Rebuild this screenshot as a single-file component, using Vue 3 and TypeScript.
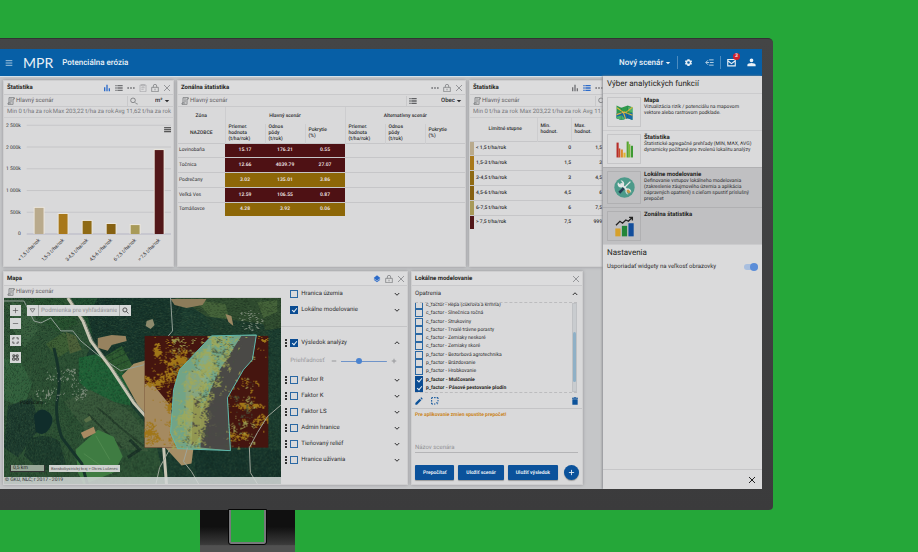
<script setup lang="ts">
import { computed, defineComponent, h, ref } from 'vue'

type Shape = { d: string; fill?: boolean }

const glyphs: Record<string, Shape[]> = {
  menu: [{ d: 'M2 5h20M2 12h20M2 19h20' }],
  bars: [{ d: 'M3 10h4v12H3zM10 2h4v20h-4zM17 13h4v9h-4z', fill: true }],
  list: [{ d: 'M1 3h4v4H1zM1 10h4v4H1zM1 17h4v4H1zM7 3h16v4H7zM7 10h16v4H7zM7 17h16v4H7z', fill: true }],
  dots: [{ d: 'M1 10h5v4H1zM9.500 10h5v4h-5zM18 10h5v4h-5z', fill: true }],
  clip: [{ d: 'M3 3h18v20H3zM8 1h8v5H8zM7 11h10M7 16h7' }],
  lock: [{ d: 'M2 10h20v13H2zM7 10V6a5 5 0 0 1 10 0v4M12 14v5' }],
  close: [{ d: 'M3 3l18 18M21 3L3 21' }],
  scroll: [{ d: 'M6 18V2h16v4h-4v15a2 2 0 0 1-4 1H3v-4h10M10 6h4M10 10h4M10 14h4' }],
  search: [{ d: 'M16 10a7 7 0 1 1-14 0 7 7 0 0 1 14 0zM15 16l5 5h3' }],
  find: [{ d: 'M17 10a7 7 0 1 1-14 0 7 7 0 0 1 14 0zM15 15l7 7' }],
  caret: [{ d: 'M3 8h18l-9 9z', fill: true }],
  down: [{ d: 'M3 8l9 9 9-9' }],
  up: [{ d: 'M3 16l9-9 9 9' }],
  layers: [{ d: 'M12 1l10 8-10 8L2 9zM2 14l10 8 10-8-2-1.500-8 6.500-8-6.500z', fill: true }],
  plus: [{ d: 'M12 3v18M3 12h18' }],
  minus: [{ d: 'M3 12h18' }],
  full: [{ d: 'M3 9V3h6M15 3h6v6M21 15v6h-6M9 21H3v-6' }],
  binocular: [{ d: 'M3 3h6v6H3zM15 3h6v6h-6zM2 14h8v7H2zM14 14h8v7h-8zM9 6h6M6 9v5M18 9v5M10 17h4' }],
  funnel: [{ d: 'M4 6h16l-8 12z' }],
  gear: [{ d: 'M19.400 13a7.500 7.500 0 0 0 0-2l2.100-1.600-2-3.500-2.500 1a7 7 0 0 0-1.700-1L15 3H9l-.4 2.900a7 7 0 0 0-1.700 1l-2.400-1-2 3.500L4.600 11a7.500 7.500 0 0 0 0 2l-2.100 1.600 2 3.500 2.400-1a7 7 0 0 0 1.700 1L9 21h6l.4-2.900a7 7 0 0 0 1.700-1l2.400 1 2-3.500zM12 15.500a3.500 3.500 0 1 1 0-7 3.500 3.500 0 0 1 0 7z', fill: true }],
  collapse: [{ d: 'M11 5h12M11 12H3M13 12h10M11 19h12M8 6l-6 6 6 6' }],
  mail: [{ d: 'M2 4h20v17H2zM3 8l9 7 9-7' }],
  person: [{ d: 'M12 11a5 5 0 1 0 0-10 5 5 0 0 0 0 10zM1 22v-4c0-3 6-5 11-5s11 2 11 5v4z', fill: true }],
  pencil: [{ d: 'M1 18v5h5L19 10l-5-5zM16 3l3-2 4 4-2 3z', fill: true }],
  marquee: [{ d: 'M2 6V2h4M9 2h5M17 2h4v4M21 9v4M2 9v5M2 17v4h4M9 21h4' }, { d: 'M15 15l8 3-3 1-1 4z', fill: true }],
  trash: [{ d: 'M4 7h16v16H4zM3 2h5l1-1h6l1 1h5v3H3z', fill: true }],
}

const Ico = defineComponent({
  props: { name: { type: String, required: true }, w: { type: Number, default: 2 } },
  setup(props) {
    return () =>
      h(
        'svg',
        { viewBox: '0 0 24 24', class: 'ico', 'aria-hidden': 'true' },
        glyphs[props.name].map((s) =>
          h('path', {
            d: s.d,
            fill: s.fill ? 'currentColor' : 'none',
            'fill-rule': 'evenodd',
            stroke: s.fill ? 'none' : 'currentColor',
            'stroke-width': props.w,
          }),
        ),
      )
  },
})

const ticks = ['2 500k', '2 000k', '1 500k', '1 000k', '500k', '0']
const classes = [
  { label: '< 1,5 t/ha/rok', value: 600, fill: '#b9aa8c', min: '0', max: '1,5' },
  { label: '1,5-3 t/ha/rok', value: 460, fill: '#a8781a', min: '1,5', max: '3' },
  { label: '3-4,5 t/ha/rok', value: 300, fill: '#8f6a14', min: '3', max: '4,5' },
  { label: '4,5-6 t/ha/rok', value: 230, fill: '#866112', min: '4,5', max: '6' },
  { label: '6-7,5 t/ha/rok', value: 205, fill: '#a89a58', min: '6', max: '7,5' },
  { label: '> 7,5 t/ha/rok', value: 1930, fill: '#521719', min: '7,5', max: '999' },
]
const bars = computed(() =>
  classes.map((c, i) => ({ ...c, x: 31 + i * 24.3, height: (c.value / 2500) * 110 })),
)

const zones = [
  { name: 'Lovinobaňa', cells: ['15.17', '176.21', '0.55'], high: true },
  { name: 'Točnica', cells: ['12.66', '4039.79', '27.07'], high: true },
  { name: 'Podrečany', cells: ['3.02', '135.01', '3.86'], high: false },
  { name: 'Veľká Ves', cells: ['12.59', '106.55', '0.87'], high: true },
  { name: 'Tomášovce', cells: ['4.28', '3.92', '0.06'], high: false },
]
const metrics = [
  ['Priemer.', 'hodnota', '(t/ha/rok)'],
  ['Odnos', 'pôdy', '(t/rok)'],
  ['Pokrytie', '(%)'],
]

const baseLayers = ref([
  { name: 'Hranica územia', on: false },
  { name: 'Lokálne modelovanie', on: true },
])
const result = ref({ name: 'Výsledok analýzy', on: true })
const layers = ref(
  ['Faktor R', 'Faktor K', 'Faktor LS', 'Admin hranice', 'Tieňovaný reliéf', 'Hranice užívania'].map((name) => ({
    name,
    on: false,
  })),
)
const opacity = ref(38)

const measures = ref(
  [
    'c_factor - Repa (cukrová a kŕmna)',
    'c_factor - Slnečnica ročná',
    'c_factor - Strukoviny',
    'c_factor - Trvalé trávne porasty',
    'c_factor - Zemiaky neskoré',
    'c_factor - Zemiaky skoré',
    'p_factor - Bezorbová agrotechnika',
    'p_factor - Brázdovanie',
    'p_factor - Hrobkovanie',
    'p_factor - Mulčovanie',
    'p_factor - Pásové pestovanie plodín',
  ].map((name, i) => ({ name, on: i > 8 })),
)
const scenario = ref('')
const query = ref('')
const fitWidgets = ref(true)

const functions = [
  { id: 'map', title: 'Mapa', text: ['Vizualizácia rizík / potenciálu na mapovom', 'vektore alebo rastrovom podklade.'], active: false },
  { id: 'stat', title: 'Štatistika', text: ['Štatistické agregačné prehľady (MIN, MAX, AVG)', 'dynamicky počítané pre zvolenú lokalitu analýzy'], active: false },
  {
    id: 'local',
    title: 'Lokálne modelovanie',
    text: ['Definovanie vstupov lokálneho modelovania', '(zakreslenie záujmového územia a aplikácia', 'nápravných opatrení) s cieľom spustiť príslušný', 'prepočet'],
    active: true,
  },
  { id: 'zonal', title: 'Zonálna štatistika', text: [] as string[], active: true },
]

// Deterministic value noise drives the erosion raster and the villages.
function hash(x: number, y: number): number {
  const n = Math.sin(x * 127.1 + y * 311.7) * 43758.5453
  return n - Math.floor(n)
}
function noise(x: number, y: number): number {
  const xi = Math.floor(x)
  const yi = Math.floor(y)
  const fx = x - xi
  const fy = y - yi
  const top = hash(xi, yi) * (1 - fx) + hash(xi + 1, yi) * fx
  const bottom = hash(xi, yi + 1) * (1 - fx) + hash(xi + 1, yi + 1) * fx
  return top * (1 - fy) + bottom * fy
}
function near(x: number, y: number, cx: number, cy: number, rx: number, ry: number): number {
  return Math.max(0, 1 - ((x - cx) / rx) ** 2 - ((y - cy) / ry) ** 2)
}
function cells(x0: number, y0: number, x1: number, y1: number, test: (x: number, y: number) => boolean): string {
  let d = ''
  for (let y = y0; y < y1; y++) for (let x = x0; x < x1; x++) if (test(x, y)) d += `M${x} ${y}h1v1h-1z`
  return d
}
const grain = (x: number, y: number) =>
  0.35 * noise((x + y) / 9, (x - y) / 7 + 30) + 0.35 * noise(x / 2.6 + 40, y / 2.6) + 0.3 * hash(x + 5, y + 9)
const ochre = cells(141, 38, 265, 150, (x, y) => {
  const bias =
    0.34 * near(x, y, 174, 70, 20, 24) +
    0.3 * near(x, y, 154, 54, 7, 12) +
    0.24 * near(x, y, 168, 42, 8, 6) +
    0.32 * near(x, y, 150, 84, 20, 9) +
    0.2 * near(x, y, 146, 138, 14, 22) +
    0.3 * near(x, y, 166, 118, 6, 40) +
    0.36 * near(x, y, 243, 108, 26, 4) +
    0.36 * near(x, y, 234, 138, 16, 6) +
    0.28 * near(x, y, 258, 122, 10, 7) +
    0.24 * near(x, y, 240, 84, 6, 6)
  return grain(x, y) + bias > 0.76
})
const lime = cells(168, 38, 252, 152, (x, y) => {
  const axis = 216 - (y - 38) * 0.3
  return grain(x + 90, y) + 0.2 * near(x, y, axis, y, 22, 1) + 0.16 * near(x, y, 188, 122, 16, 28) > 0.7
})
const shade = cells(170, 38, 250, 150, (x, y) => grain(x + 30, y + 70) + 0.12 * near(x, y, 222 - (y - 38) * 0.3, y, 14, 1) > 0.74)
const houses = cells(22, 8, 265, 112, (x, y) => {
  const p =
    near(x, y, 57, 78, 18, 12) + near(x, y, 46, 96, 16, 10) + near(x, y, 74, 92, 10, 14) + near(x, y, 245, 22, 15, 13)
  return p > 0 && 0.6 * hash(x, y) + 0.4 * noise(x / 3, y / 3) > 0.86 - p * 0.2
})
const canopy = cells(0, 0, 278, 188, (x, y) => hash(x + 7, y + 3) < 0.22)
const canopyDark = cells(0, 0, 278, 188, (x, y) => hash(x + 70, y + 13) < 0.2)
</script>

<template>
  <div class="scene">
    <div class="monitor">
      <div class="screen">
        <header class="topbar">
          <button class="plain" aria-label="Menu"><Ico name="menu" /></button>
          <span class="logo">MPR</span>
          <h1>Potenciálna erózia</h1>
          <div class="actions">
            <label class="pick"><select aria-label="Scenár"><option>Nový scenár</option></select><Ico name="caret" class="tiny" /></label>
            <i class="rule"></i>
            <button class="plain" aria-label="Nastavenia"><Ico name="gear" /></button>
            <button class="plain" aria-label="Panel"><Ico name="collapse" /></button>
            <i class="rule"></i>
            <button class="plain mail" aria-label="Správy"><Ico name="mail" :w="3" /><b>3</b></button>
            <button class="plain" aria-label="Profil"><Ico name="person" /></button>
          </div>
        </header>

        <div class="body">
          <main class="workspace">
            <div class="row upper">
              <section class="widget">
                <div class="head">
                  <h2>Štatistika</h2>
                  <button class="plain on" aria-label="Graf"><Ico name="bars" /></button>
                  <button class="plain" aria-label="Tabuľka"><Ico name="list" /></button>
                  <button class="plain" aria-label="Viac"><Ico name="dots" /></button>
                  <button class="plain faint" aria-label="Kopírovať"><Ico name="clip" /></button>
                  <button class="plain" aria-label="Zamknúť"><Ico name="lock" /></button>
                  <button class="plain" aria-label="Zavrieť"><Ico name="close" /></button>
                </div>
                <div class="bar">
                  <Ico name="scroll" /><span>Hlavný scenár</span>
                  <button class="plain split" aria-label="Hľadať"><Ico name="search" /></button>
                  <label class="pick unit"><select aria-label="Jednotka"><option>m²</option></select><Ico name="caret" class="tiny" /></label>
                </div>
                <p class="totals"><span>Min 0 t/ha za rok</span><span>Max 203,22 t/ha za rok</span><span>Avg 11,62 t/ha za rok</span></p>
                <div class="chart">
                  <svg viewBox="0 0 171 148" role="img" aria-label="Štatistika">
                    <g v-for="(t, i) in ticks" :key="t">
                      <path :d="`M23 ${6.5 + i * 22}H169`" :stroke="i === 5 ? '#b4b4c4' : '#c6c6c8'" stroke-width="1" />
                      <text x="17" :y="8 + i * 22" text-anchor="end" class="tick">{{ t }}</text>
                    </g>
                    <g v-for="b in bars" :key="b.label">
                      <rect :x="b.x - 1" :y="115.5 - b.height" width="11" :height="b.height + 1" fill="#ebe6dc" />
                      <rect :x="b.x" :y="116.5 - b.height" width="9" :height="b.height" :fill="b.fill" />
                      <text :transform="`translate(${b.x + 6} 123) rotate(-45)`" text-anchor="end" class="tick">{{ b.label }}</text>
                    </g>
                    <path d="M162 9h7M162 11h7M162 13h7" stroke="#333" stroke-width="1" />
                  </svg>
                </div>
              </section>

              <section class="widget">
                <div class="head">
                  <h2>Zonálna štatistika</h2>
                  <button class="plain" aria-label="Viac"><Ico name="dots" /></button>
                  <button class="plain" aria-label="Zamknúť"><Ico name="lock" /></button>
                  <button class="plain" aria-label="Zavrieť"><Ico name="close" /></button>
                </div>
                <div class="bar">
                  <Ico name="scroll" /><span>Hlavný scenár</span>
                  <button class="plain split" aria-label="Stĺpce"><Ico name="list" /></button>
                  <label class="pick zone"><select aria-label="Zóna"><option>Obec</option></select><Ico name="caret" class="tiny" /></label>
                </div>
                <table class="zonal">
                  <colgroup><col class="first" /><col span="6" /></colgroup>
                  <thead>
                    <tr class="group"><th>Zóna</th><th colspan="3">Hlavný scenár</th><th colspan="3">Alternatívny scenár</th></tr>
                    <tr class="names">
                      <th class="mid">NAZOBCE</th>
                      <th v-for="n in 6" :key="n"><span v-for="l in metrics[(n - 1) % 3]" :key="l">{{ l }}</span></th>
                    </tr>
                  </thead>
                  <tbody>
                    <tr v-for="z in zones" :key="z.name">
                      <th>{{ z.name }}</th>
                      <td v-for="c in z.cells" :key="c" :class="z.high ? 'high' : 'low'">{{ c }}</td>
                      <td></td><td></td><td></td>
                    </tr>
                  </tbody>
                </table>
              </section>

              <section class="widget cut">
                <div class="inner">
                  <div class="head">
                    <h2>Štatistika</h2>
                    <button class="plain" aria-label="Graf"><Ico name="bars" /></button>
                    <button class="plain on" aria-label="Tabuľka"><Ico name="list" /></button>
                    <button class="plain" aria-label="Viac"><Ico name="dots" /></button>
                    <button class="plain" aria-label="Kopírovať"><Ico name="clip" /></button>
                    <button class="plain" aria-label="Zamknúť"><Ico name="lock" /></button>
                    <button class="plain" aria-label="Zavrieť"><Ico name="close" /></button>
                  </div>
                  <div class="bar">
                    <Ico name="scroll" /><span>Hlavný scenár</span>
                    <button class="plain split" aria-label="Hľadať"><Ico name="search" /></button>
                    <label class="pick unit"><Ico name="caret" class="tiny" /></label>
                  </div>
                  <p class="totals"><span>Min 0 t/ha za rok</span><span>Max 203,22 t/ha za rok</span><span>Avg 11,62 t/ha za rok</span></p>
                  <table class="limits">
                    <colgroup><col class="sw" /><col class="lab" /><col class="num" /><col class="num2" /><col /></colgroup>
                    <thead>
                      <tr><th></th><th class="mid">Limitné stupne</th><th>Min.<br />hodnot.</th><th>Max.<br />hodnot.</th><th></th></tr>
                    </thead>
                    <tbody>
                      <tr v-for="c in classes" :key="c.label">
                        <td :style="{ background: c.fill }"></td><td>{{ c.label }}</td><td class="r">{{ c.min }}</td><td class="r">{{ c.max }}</td><td></td>
                      </tr>
                    </tbody>
                  </table>
                </div>
              </section>
            </div>

            <div class="row lower">
              <section class="widget">
                <div class="head">
                  <h2>Mapa</h2>
                  <button class="plain on" aria-label="Vrstvy"><Ico name="layers" /></button>
                  <button class="plain" aria-label="Zamknúť"><Ico name="lock" /></button>
                  <button class="plain" aria-label="Zavrieť"><Ico name="close" /></button>
                </div>
                <div class="mapsplit">
                  <div class="mapcol">
                    <div class="bar"><Ico name="scroll" /><span>Hlavný scenár</span></div>
                    <div class="map">
                      <svg class="ground" viewBox="0 0 278 188" preserveAspectRatio="xMinYMin slice" role="img" aria-label="Mapa">
                        <rect width="278" height="188" fill="#1b3c2f" />
                        <path d="M0 0H68L88 46 74 78 120 100 150 135 162 188H0z" fill="#2b4f33" />
                        <path d="M8 4l22 6 4 22-14 18-12-20z" fill="#355c3c" />
                        <path d="M30 0h30l14 26-20 8-20-14z" fill="#264f2e" />
                        <path d="M42 46l18-12 10 16-16 10z" fill="#3b5c33" />
                        <path d="M62 34l10 4 6 14-12 4z" fill="#4b5f38" />
                        <path d="M0 60l18 6 10 20-8 24-20-8z" fill="#315f3c" />
                        <path d="M4 108l24-8 8 30-22 30-14-10z" fill="#1d3b2e" />
                        <path d="M66 0l24 40 42-28L150 0z" fill="#1e4a2f" />
                        <path d="M84 18l10-18h84v26l-30 38-38 6-20-28z" fill="#17352b" />
                        <path d="M75 60l20-4 28 22 4 30-34-8-18-16z" fill="#1f6036" />
                        <path d="M96 62l22-14 12 22-14 6z" fill="#2d5a30" />
                        <path d="M100 61l22-12M104 64l22-10M110 69l20-9" stroke="#21452a" stroke-width="1" />
                        <path d="M60 104l26-12 36 18 28 30-6 14-44-4-20-20z" fill="#37573a" />
                        <path d="M94 110l30 26 18 14M84 116l34 34" stroke="#26402c" stroke-width="2" fill="none" />
                        <path d="M126 142l10 10-12 8" stroke="#1b3428" stroke-width="3" fill="none" />
                        <path d="M24 142q18-8 32 2l6 22-24 8-18-16z" fill="#1d3c2d" />
                        <path d="M170 0h108v30l-40 6-30-14-24-16z" fill="#2e4a2e" />
                        <path d="M192 2l30 4 4 16-18-2zM254 4l20-2v12l-14 6z" fill="#436138" />
                        <path d="M200 18l60 8 4 12h-50z" fill="#1e3d2d" />
                        <path d="M190 152h88v36h-84z" fill="#16342b" />
                        <path :d="canopy" fill="#5a7a50" opacity=".2" />
                        <path :d="canopyDark" fill="#06140f" opacity=".25" />
                        <path d="M30 118q6-10 14-4t2 16-14 4z" fill="#102d2b" />
                        <path d="M94 40l14-3 14 1 1 5-15 4-4 6-10-3z" fill="#97825f" />
                        <path d="M143 23l6-2 2 6-4 4-5-3z" fill="#8d8a6c" />
                        <path d="M167 1h36l-4 6-16 3-12-3z" fill="#8c7c5a" />
                        <path d="M222 16l6 2 2 10-5-4z" fill="#9b8762" />
                        <path d="M72 152l22-20 16 7 9 20-9 16-30 12-6-12z" fill="#3f7c42" />
                        <path d="M80 156l28 20M92 138l14 24" stroke="#4f8a4e" stroke-width="1" />
                        <path d="M77 135l13-6 2 6-12 6z" fill="#a98a62" />
                        <path d="M80 122l6-4 2 4-6 3z" fill="#5a7048" />
                        <path d="M118 78l12-12 14-4 20 30 8 40 18 18-2 16-10 2-18-20-20-30z" fill="#a58e66" />
                        <path d="M50 50Q58 80 54 98t4 42l20 26 6 22" stroke="#16332a" stroke-width="3" fill="none" />
                        <path d="M0 3l20 0 10 20 7 2 10-5 10 13 12 0 8 10 17 14 23 16 23-6 29-34-2-33" stroke="#93a097" stroke-width="1" fill="none" />
                        <path d="M64 0l15 23 8 20 20 27 23 35 24 27 6 17 3 39" stroke="#c8c5b4" stroke-width="3" fill="none" />
                        <path d="M66 0l15 23 8 20 20 27 23 35 24 27" stroke="#7d8474" stroke-width="1" fill="none" />
                        <path :d="houses" fill="#9aa294" opacity=".7" />
                        <rect x="141" y="38" width="124" height="112" fill="#45150f" />
                        <path d="M141 86l8 0 18 22 3 30 12 12h-41z" fill="#a58a60" />
                        <path :d="ochre" fill="#a07618" />
                        <path d="M208 38l45-1-4 25-9 10-16 28 3 53-53-2-7-16 3-43 6-20z" fill="#72a487" />
                        <path d="M238 38h15l-4 24-9 10-16 28 3 53-30-3 0-34 18-42z" fill="#4a4946" />
                        <path d="M182 78l8-6 12 4-6 34-4 38h-8l-2-34z" fill="#8fa57e" opacity=".7" />
                        <path d="M190 100l7 4 0 34-9 10z" fill="#544f42" />
                        <path d="M206 46l-14 26 10 18 8-22z" fill="#8fb08a" opacity=".6" />
                        <path :d="shade" fill="#48563f" opacity=".8" />
                        <path :d="lime" fill="#a3a955" opacity=".8" />
                        <path d="M240 42l11-3-4 22-9 10-12 20-3-8z" fill="#4a4946" />
                        <path d="M206 104l14-8 3 50-18 2z" fill="#4a4946" opacity=".8" />
                        <path d="M208 38l45-1-4 25-9 10-16 28 3 53-53-2-7-16 3-43 6-20z" fill="none" stroke="#5fb8ac" stroke-width="1" />
                        <path d="M278 107l-14 12-10 16-8 15 1 25 8 13M184 150l-4 14 8 10 8 14M166 152l-10 18-4 18" stroke="#9fa59a" stroke-width="1" fill="none" />
                        <text x="16" y="106" class="place">Podrečany</text>
                      </svg>
                      <div class="zoomer">
                        <button aria-label="Priblížiť"><Ico name="plus" /></button>
                        <button aria-label="Oddialiť"><Ico name="minus" /></button>
                        <button class="apart" aria-label="Celá obrazovka"><Ico name="full" :w="3" /></button>
                        <button class="apart" aria-label="Prehľad"><Ico name="binocular" :w="3" /></button>
                      </div>
                      <div class="mapsearch">
                        <button aria-label="Filter"><Ico name="funnel" /></button>
                        <input v-model="query" type="text" aria-label="Podmienka" placeholder="Podmienka pre vyhľadávanie" />
                        <button aria-label="Hľadať"><Ico name="find" :w="3" /></button>
                      </div>
                      <div class="legend"><span class="scale">0,5 km</span><span class="where">Banskobystrický kraj &gt; Okres Lučenec</span></div>
                      <div class="credit">© GKÚ, NLC; r 2017 - 2019</div>
                    </div>
                  </div>
                  <div class="layers">
                    <div v-for="l in baseLayers" :key="l.name" class="layer">
                      <i></i><label><input v-model="l.on" type="checkbox" />{{ l.name }}</label><Ico name="down" :w="4" class="tiny" />
                    </div>
                    <div class="layer top">
                      <i class="grip"></i><label><input v-model="result.on" type="checkbox" />{{ result.name }}</label><Ico name="up" :w="4" class="tiny" />
                    </div>
                    <div class="opacity">
                      <label for="opacity">Priehľadnosť</label><Ico name="minus" class="tiny" :w="4" />
                      <input id="opacity" v-model="opacity" type="range" min="0" max="100" /><Ico name="plus" class="tiny" :w="4" />
                    </div>
                    <div v-for="l in layers" :key="l.name" class="layer">
                      <i class="grip"></i><label><input v-model="l.on" type="checkbox" />{{ l.name }}</label><Ico name="down" :w="4" class="tiny" />
                    </div>
                  </div>
                </div>
              </section>

              <section class="widget local">
                <div class="head">
                  <h2>Lokálne modelovanie</h2>
                  <button class="plain" aria-label="Zavrieť"><Ico name="close" /></button>
                </div>
                <div class="fold"><span>Opatrenia</span><Ico name="up" :w="4" class="tiny" /></div>
                <div class="measures">
                  <div class="options">
                    <label v-for="m in measures" :key="m.name" :class="{ picked: m.on }"><input v-model="m.on" type="checkbox" />{{ m.name }}</label>
                  </div>
                  <div class="track"><i></i></div>
                </div>
                <div class="tools">
                  <button class="plain" aria-label="Upraviť"><Ico name="pencil" /></button>
                  <button class="plain" aria-label="Výber"><Ico name="marquee" :w="3" /></button>
                  <button class="plain last" aria-label="Odstrániť"><Ico name="trash" /></button>
                </div>
                <p class="warn">Pre aplikovanie zmien spustite prepočet!</p>
                <input v-model="scenario" class="name" type="text" aria-label="Názov scenára" placeholder="Názov scenára" />
                <div class="buttons">
                  <button>Prepočítať</button><button>Uložiť scenár</button><button>Uložiť výsledok</button>
                  <button class="add" aria-label="Pridať"><Ico name="plus" :w="3" /></button>
                </div>
              </section>
            </div>
          </main>

          <aside class="side">
            <h3>Výber analytických funkcií</h3>
            <div v-for="f in functions" :key="f.id" class="fn" :class="{ active: f.active }">
              <div class="pic">
                <svg v-if="f.id === 'map'" viewBox="0 0 32 32">
                  <path d="M1 3l9 4 12-4 9 3v24l-9-3-12 3-9-3z" fill="#2f9a4c" />
                  <path d="M1 18l13-4 8 5 9-3v14l-9-3-12 3-9-3z" fill="#1769a6" />
                  <path d="M1 24l10-3 6 7-7 2-9-3zM22 5l9 2v9l-8-3z" fill="#4db26a" />
                  <path d="M2 7l12 9 6-1 11-9M14 16l4 12M1 20l14-5 16 6" stroke="#e0b63c" stroke-width="2" fill="none" />
                  <path d="M10 7v23M22 4v23" stroke="#14514e" stroke-width="1" opacity=".5" />
                </svg>
                <svg v-else-if="f.id === 'stat'" viewBox="0 0 32 32">
                  <path d="M1 3h4v28H1z" fill="#b62d28" /><path d="M5 14h3v17H5z" fill="#c94a2a" /><path d="M9 16h4v15H9z" fill="#dc8a2c" />
                  <path d="M14 22h4v9h-4z" fill="#e0b52e" /><path d="M20 1h4v30h-4z" fill="#56a431" /><path d="M24 6h3v25h-3z" fill="#80b93a" /><path d="M28 9h4v22h-4z" fill="#3e9a33" />
                </svg>
                <svg v-else-if="f.id === 'local'" viewBox="0 0 32 32" class="big">
                  <circle cx="16" cy="16" r="15.500" fill="#4c9a8a" />
                  <path d="M10 10l12 12" stroke="#e3e6e6" stroke-width="3" />
                  <path d="M6 8l4 4 3-3-3-4a5.500 5.500 0 0 1 5 8l-3 3a5.500 5.500 0 0 1-6-8zM26 24l-4-4-3 3 3 4a5.500 5.500 0 0 1-4-8l3-2a5.500 5.500 0 0 1 5 7z" fill="#e3e6e6" />
                  <path d="M25 7l-9 9" stroke="#e3e6e6" stroke-width="2" /><path d="M15 17l-7 7" stroke="#243b52" stroke-width="4" /><path d="M20 20l4 4" stroke="#c99a45" stroke-width="4" />
                </svg>
                <svg v-else viewBox="0 0 32 32" class="big">
                  <path d="M2 19h8v12H2z" fill="#d6a12c" /><path d="M12 15h8v16h-8z" fill="#23853a" /><path d="M22 11h8v20h-8z" fill="#124e9c" />
                  <path d="M3 14l6-6 4 3 5-5 4 2 6-6M23 2h5v5" stroke="#222" stroke-width="2" fill="none" />
                </svg>
              </div>
              <div class="copy"><h4>{{ f.title }}</h4><p><span v-for="t in f.text" :key="t">{{ t }}</span></p></div>
            </div>
            <h3 class="settings">Nastavenia</h3>
            <label class="toggle"><span>Usporiadať widgety na veľkosť obrazovky</span><input v-model="fitWidgets" type="checkbox" /></label>
            <div class="foot"><button class="plain" aria-label="Zavrieť panel"><Ico name="close" :w="3" /></button></div>
          </aside>
        </div>
      </div>
    </div>
    <div class="stand"><div class="hole"></div></div>
  </div>
</template>

<style>
body { margin: 0; background: #25a739; }
</style>

<style scoped>
* { box-sizing: border-box; }
.scene {
  display: flex; flex-direction: column; height: 100vh; min-height: 552px; padding-top: 38px;
  background: #25a739; font-family: Roboto, "Liberation Sans", sans-serif; font-size: 6px; line-height: 8px; color: #2c2c2e;
  text-rendering: geometricPrecision;
}
.monitor {
  flex: 1; display: flex; margin-right: 145px; padding: 10px 11px 21px 0; min-height: 0;
  background: linear-gradient(#444546, #3b3b3c); border-radius: 0 5px 4px 0; border-top: 1px solid #333;
}
.screen { flex: 1; display: flex; flex-direction: column; min-width: 0; background: #c5c6c8; overflow: hidden; }
h1, h2, h3, h4, p { margin: 0; }
button, input, select { font: inherit; color: inherit; margin: 0; padding: 0; border: 0; background: none; border-radius: 0; text-rendering: inherit; }
button { cursor: pointer; }
:deep(.ico) { display: block; flex: none; width: 8px; height: 8px; }
:deep(.ico.tiny) { width: 6px; height: 6px; }
.plain { flex: none; display: block; }

.topbar { flex: none; display: flex; align-items: center; height: 27px; padding: 0 6px 0 5px; background: #075fa6; color: #eaf1f7; }
.logo { margin: 0 9px 0 10px; font: 400 14px/16px Lato, sans-serif; }
h1 { font-size: 8px; line-height: 10px; font-weight: 500; }
.actions { margin-left: auto; display: flex; align-items: center; font-size: 8px; line-height: 10px; font-weight: 500; }
.actions .plain { margin-right: 12px; }
.actions .plain :deep(.ico) { width: 9px; height: 9px; }
.actions .plain:last-child { margin-right: 0; }
.actions .mail { position: relative; margin-right: 11px; }
.mail b {
  position: absolute; left: 6px; top: -5px; width: 7px; height: 7px; border-radius: 4px; background: #d3202c;
  font-size: 5px; line-height: 7px; text-align: center;
}
.rule { width: 1px; height: 13px; background: #4d8cc0; margin: 0 6px; }
.actions .plain + .rule { margin-left: -6px; }
.pick { display: flex; align-items: center; gap: 1px; }
.pick select { appearance: none; }

.body { flex: 1; display: flex; min-height: 0; }
.workspace { flex: 1; display: flex; flex-direction: column; gap: 4px; min-width: 0; padding: 3px 0 4px 3px; border-top: 1px solid #d3e2ec; }
.row { display: grid; gap: 3px; min-height: 0; }
.upper { flex: 187 1 0; grid-template-columns: 171fr 289fr 134fr; }
.lower { flex: 214 1 0; grid-template-columns: 405fr 172fr; margin-right: 20px; }
.widget { display: flex; flex-direction: column; min-width: 0; min-height: 0; background: #d9d9da; border: 1px solid #cfcfd0; box-shadow: 0 0 3px #96979a; overflow: hidden; }
.cut { border-right: 0; }
.inner { min-width: 171px; }
.head { flex: none; display: flex; align-items: center; gap: 4px; height: 14px; padding: 0 2px 0 3px; border-bottom: 1px solid #c9c9cb; color: #717275; background: #dcdcdd; }
.head h2 { flex: 1; font-size: 6px; line-height: 8px; font-weight: 700; color: #1f1f21; white-space: nowrap; }
.head .on { color: #2c6bc9; }
.head .faint { color: #a5a5a8; }
.bar { flex: none; display: flex; align-items: center; gap: 1px; height: 12px; padding: 0 3px; border-bottom: 1px solid #c9c9cb; color: #5f6063; white-space: nowrap; }
.bar .split { margin-left: auto; border-left: 1px solid #c9c9cb; padding: 1px 0 1px 2px; }
.bar .pick { color: #2c2c2e; justify-content: flex-end; font-weight: 500; }
.unit { width: 31px; }
.zone { width: 44px; }
.totals { flex: none; display: flex; justify-content: space-between; height: 11px; padding: 0 2px 0 3px; line-height: 10px; font-size: 6px; color: #77787b; white-space: nowrap; border-bottom: 1px solid #cdcdcf; }
.chart { flex: 1; min-height: 0; }
.chart svg { display: block; width: 100%; height: 100%; }
.tick { font-size: 5px; fill: #2c2c2e; }

table { border-collapse: collapse; table-layout: fixed; width: 100%; font-size: 5px; line-height: 6px; }
th, td { padding: 0; font-weight: 500; text-align: left; }
.first { width: 47px; }
.zonal { height: 109px; }
.zonal thead tr { height: 17px; }
.zonal thead .names { height: 19px; }
.zonal .group th, .zonal .mid { text-align: center; }
.zonal .names th { padding-left: 3px; border-left: 1px solid #cdcdcf; }
.zonal .names th:first-child { padding-left: 0; border-left: 0; }
.zonal thead .group th + th { border-left: 1px solid #cdcdcf; }
.zonal span { display: block; }
.zonal tbody tr { border-top: 1px solid #c6c6c8; }
.zonal tbody th { padding-left: 1px; font-weight: 400; }
.zonal td { text-align: center; color: #e3dede; font-weight: 700; }
.high { background: #4e1114; }
.low { background: #8d6708; }
.sw { width: 4px; }
.lab { width: 63px; }
.num { width: 34px; }
.num2 { width: 31px; }
.limits { height: 111px; }
.limits thead tr { height: 23px; }
.limits thead .mid { text-align: center; }
.limits thead th + .mid ~ th { padding-left: 3px; border-left: 1px solid #cdcdcf; }
.limits tbody tr { border-top: 1px solid #c6c6c8; }
.limits tbody td:nth-child(2) { padding-left: 2px; }
.limits .r { text-align: right; }

input[type='checkbox'] { appearance: none; flex: none; position: relative; width: 8px; height: 8px; border: 1px solid #2a68a3; }
.layer input:checked, .options input:checked { background: #0b4c92; border-color: #0b4c92; }
.layer input:checked::before, .options input:checked::before {
  content: ''; position: absolute; left: 2px; top: 0; width: 2px; height: 4px;
  border: solid #e6eef5; border-width: 0 1px 1px 0; transform: rotate(40deg);
}

.mapsplit { flex: 1; display: grid; grid-template-columns: 278fr 126fr; min-height: 0; }
.mapcol { display: flex; flex-direction: column; min-width: 0; }
.map { flex: 1; position: relative; min-height: 0; overflow: hidden; }
.ground { position: absolute; inset: 0; width: 100%; height: 100%; }
.place { font-size: 5px; fill: #0d1512; }
.zoomer { position: absolute; left: 6px; top: 7px; display: flex; flex-direction: column; gap: 2px; }
.map button { display: flex; align-items: center; justify-content: center; width: 11px; height: 11px; background: #d6d8d8; color: #444; }
.map button :deep(.ico) { width: 7px; height: 7px; }
.zoomer .apart { margin-top: 4px; }
.mapsearch { position: absolute; left: 23px; top: 7px; display: flex; gap: 1px; background: #a9abab; }
.mapsearch input { width: 80px; height: 11px; padding: 0 2px; background: #d6d8d8; }
input::placeholder { color: #929396; opacity: 1; }
.legend { position: absolute; left: 6px; bottom: 12px; display: flex; gap: 4px; font-size: 5px; line-height: 7px; }
.scale { width: 35px; padding-left: 2px; background: #98a898; border: solid #333; border-width: 0 1px 1px; line-height: 6px; color: #222; }
.where { padding: 0 2px; background: #cfd3d0; font-size: 4px; color: #555; }
.credit { position: absolute; left: 0; right: 0; bottom: 0; height: 7px; padding-left: 1px; background: rgba(210, 214, 213, 0.88); font-size: 5px; line-height: 7px; }
.layers { min-width: 0; }
.layer { display: flex; align-items: center; gap: 3px; height: 16px; padding: 0 7px 0 4px; }
.layer:nth-child(2) { margin-bottom: 8px; }
.layer > i { width: 2px; height: 8px; }
.layer .grip { background: repeating-linear-gradient(#333 0 2px, transparent 2px 3px); }
.layer label { flex: 1; display: flex; align-items: center; gap: 3px; white-space: nowrap; }
.top { height: 33px; border-top: 1px solid #c4c4c6; }
.opacity { display: flex; align-items: center; height: 18px; margin: -7px 0 2px; padding: 0 10px 0 9px; gap: 4px; color: #97989b; }
.opacity label { flex: none; width: 37px; }
.opacity input { appearance: none; flex: 1; min-width: 0; height: 6px; background: linear-gradient(#6f94c9, #6f94c9) center / 100% 1px no-repeat; }
.opacity input::-webkit-slider-thumb { appearance: none; width: 6px; height: 6px; border-radius: 3px; background: #4a83d0; }

.local { padding-bottom: 4px; }
.fold { flex: none; display: flex; align-items: center; justify-content: space-between; height: 16px; padding: 0 4px 0 3px; }
.measures { flex: none; display: flex; justify-content: space-between; height: 91px; margin: 0 5px 0 3px; border: dashed #bcbcbe; border-width: 1px 0; overflow: hidden; font-size: 5px; }
.options { display: flex; flex-direction: column; justify-content: space-between; height: 91px; margin-top: -2px; }
.options label { display: flex; align-items: center; gap: 3px; height: 8px; white-space: nowrap; }
.options .picked { font-weight: 700; color: #1f1f21; }
.track { width: 5px; background: #c9cccf; border: 1px solid #bfc1c4; padding-top: 28px; }
.track i { display: block; height: 50px; background: #8fb0c6; border-radius: 2px; }
.tools { flex: none; display: flex; gap: 8px; align-items: center; height: 16px; padding: 0 3px; border-bottom: 1px solid #c4c4c6; color: #0c529a; }
.tools .last { margin-left: auto; }
.warn { flex: 1; padding: 2px 3px 0; font-size: 5px; font-weight: 700; color: #c98320; }
.name { flex: none; height: 10px; margin: 0 4px 12px 3px; border-bottom: 1px solid #b4b4b6; }
.buttons { flex: none; display: flex; align-items: center; gap: 4px; padding: 0 3px; }
.buttons button { flex: 1 1 auto; height: 15px; background: #0b529b; color: #e6edf4; font-size: 5px; font-weight: 700; border-radius: 1px; box-shadow: 0 1px 1px #999; white-space: nowrap; }
.buttons .add { flex: none; display: flex; align-items: center; justify-content: center; width: 15px; border-radius: 8px; margin-left: 2px; }
.buttons .add :deep(.ico) { width: 7px; height: 7px; }

.side { flex: 0 0 159px; display: flex; flex-direction: column; min-width: 0; background: #dadadb; box-shadow: -1px 0 2px #8e9094; z-index: 1; }
h3 { flex: none; height: 17px; padding-left: 4px; font-size: 8px; line-height: 16px; font-weight: 400; color: #1f1f21; }
.fn { flex: none; display: flex; gap: 3px; min-height: 37px; padding: 3px 4px; border-top: 1px solid #cbcbcd; }
.fn:nth-child(4) { min-height: 40px; }
.active { background: #c0c0c2; border-top-color: #b0b0b2; }
.pic { flex: none; display: flex; align-items: center; justify-content: center; width: 34px; border: 1px solid #c6c6c8; }
.active .pic { border-color: #b0b0b2; }
.pic svg { width: 17px; height: 17px; }
.pic .big { width: 21px; height: 21px; }
h4 { font-size: 6px; line-height: 7px; font-weight: 700; color: #1f1f21; }
.copy p { font-size: 5px; line-height: 6px; color: #2c2c2e; }
.copy span { display: block; white-space: nowrap; }
.settings { border-top: 1px solid #cbcbcd; }
.toggle { flex: none; display: flex; align-items: center; justify-content: space-between; height: 12px; padding: 0 4px; }
.toggle input { width: 14px; height: 6px; border: 0; border-radius: 3px; background: #a9bfdf; }
.toggle input::before { content: ''; position: absolute; left: 0; top: -1px; width: 8px; height: 8px; border-radius: 4px; background: #8a8c90; }
.toggle input:checked::before { left: 6px; background: #5b8dd8; }
.foot { margin-top: auto; flex: none; display: flex; align-items: center; justify-content: flex-end; height: 20px; padding-right: 6px; border-top: 1px solid #c6c6c8; color: #222; }

.stand { flex: none; width: 95px; height: 42px; margin-left: 200px; padding-left: 29px; background: linear-gradient(#101010 0 40%, #3a3a3a 82%, #515151 85%); }
.hole { width: 37px; height: 34px; background: #25a739; border: solid #77797b; border-width: 0 2px 2px; outline: 1px solid #060606; border-radius: 0 0 2px 2px; }
</style>
